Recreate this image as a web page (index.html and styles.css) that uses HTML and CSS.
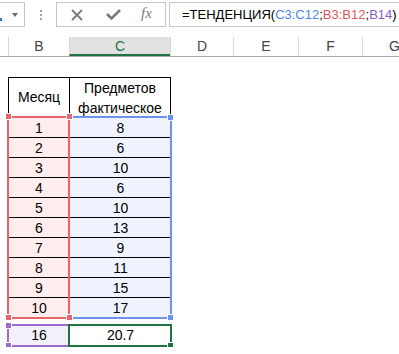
FILE: index.html
```html
<!DOCTYPE html>
<html lang="ru">
<head>
    <meta charset="UTF-8">
    <meta name="viewport" content="width=device-width, initial-scale=1.0">
    <title>ТЕНДЕНЦИЯ</title>
    <link rel="stylesheet" href="styles.css">
</head>
<body>
    <div class="toolbar">
        <div class="name-box">
            <span class="name-mark"></span>
            <span class="dropdown"></span>
        </div>
        <div class="grip"><span></span><span></span><span></span></div>
        <div class="fx-buttons">
            <svg class="btn-icon" width="14" height="14" viewBox="0 0 14 14">
                <path d="M2 2 L12 12 M12 2 L2 12" stroke="#7b7b7b" stroke-width="1.8" fill="none"/>
            </svg>
            <svg class="btn-icon" width="15" height="11" viewBox="0 0 15 11">
                <path d="M1 5 L5.5 9.5 L14 1" stroke="#7b7b7b" stroke-width="2.6" fill="none"/>
            </svg>
            <span class="fx">fx</span>
        </div>
        <div class="formula">=ТЕНДЕНЦИЯ(<span class="ref-blue">C3:C12</span>;<span class="ref-red">B3:B12</span>;<span class="ref-purple">B14</span>)</div>
    </div>

    <div class="col-headers">
        <div class="col corner"></div>
        <div class="col col-b">B</div>
        <div class="col col-c selected">C</div>
        <div class="col col-d">D</div>
        <div class="col col-e">E</div>
        <div class="col col-f">F</div>
        <div class="col col-g">G</div>
    </div>

    <div class="sheet">
        <div class="row row-empty"></div>
        <div class="row row-head">
            <div class="cell cell-b">Месяц</div>
            <div class="cell cell-c">Предметов<br>фактическое</div>
        </div>
        <div class="row data"><div class="cell cell-b">1</div><div class="cell cell-c">8</div></div>
        <div class="row data"><div class="cell cell-b">2</div><div class="cell cell-c">6</div></div>
        <div class="row data"><div class="cell cell-b">3</div><div class="cell cell-c">10</div></div>
        <div class="row data"><div class="cell cell-b">4</div><div class="cell cell-c">6</div></div>
        <div class="row data"><div class="cell cell-b">5</div><div class="cell cell-c">10</div></div>
        <div class="row data"><div class="cell cell-b">6</div><div class="cell cell-c">13</div></div>
        <div class="row data"><div class="cell cell-b">7</div><div class="cell cell-c">9</div></div>
        <div class="row data"><div class="cell cell-b">8</div><div class="cell cell-c">11</div></div>
        <div class="row data"><div class="cell cell-b">9</div><div class="cell cell-c">15</div></div>
        <div class="row data"><div class="cell cell-b">10</div><div class="cell cell-c">17</div></div>
        <div class="row row-gap"></div>
        <div class="row row-result">
            <div class="cell cell-b">16</div>
            <div class="cell cell-c">20.7</div>
        </div>

        <!-- рамки диапазонов из формулы -->
        <div class="range range-red"></div>
        <div class="range range-blue"></div>
        <div class="range range-purple"></div>
        <div class="range range-active"></div>

        <span class="handle red" style="left: 5px; top: 56px;"></span>
        <span class="handle red" style="left: 66px; top: 56px;"></span>
        <span class="handle red" style="left: 5px; top: 257px;"></span>
        <span class="handle red" style="left: 66px; top: 257px;"></span>
        <span class="handle blue" style="left: 167px; top: 57px;"></span>
        <span class="handle blue" style="left: 167px; top: 257px;"></span>
        <span class="handle purple" style="left: 5px; top: 265px;"></span>
        <span class="handle purple" style="left: 5px; top: 285px;"></span>
        <span class="handle green" style="left: 167px; top: 285px;"></span>
    </div>
</body>
</html>
```

FILE: styles.css
```css
body {
    margin: 0;
    background-color: white;
    font-family: "Liberation Sans", Arial, sans-serif;
    color: black;
    overflow: hidden;
}

/* строка формул */
.toolbar {
    display: flex;
    align-items: flex-start;
    height: 30px;
    padding-top: 2px;
    box-sizing: border-box;
    background-color: white;
    overflow: hidden;
}

.toolbar > div {
    flex-shrink: 0;
}

.name-box {
    position: relative;
    width: 24px;
    height: 23px;
    border: 1px solid #c6c6c6;
    border-left: none;
}

.name-mark {
    position: absolute;
    left: 0;
    top: 15px;
    width: 2px;
    height: 3px;
    background-color: #2b78d0;
}

.dropdown {
    position: absolute;
    left: 12px;
    top: 10px;
    border-left: 3px solid transparent;
    border-right: 3px solid transparent;
    border-top: 4px solid #6b6b6b;
}

.grip {
    display: flex;
    flex-direction: column;
    gap: 2px;
    margin-left: 15px;
    padding-top: 8px;
}

.grip span {
    width: 2px;
    height: 2px;
    background-color: #a6a6a6;
}

.fx-buttons {
    display: flex;
    align-items: center;
    width: 108px;
    height: 23px;
    margin-left: 14px;
    border: 1px solid #c6c6c6;
}

.btn-icon:first-child {
    margin-left: 13px;
}

.btn-icon + .btn-icon {
    margin-left: 22px;
}

.fx {
    margin-left: 20px;
    margin-top: -3px;
    font-family: "Liberation Serif", serif;
    font-style: italic;
    font-size: 15px;
    color: #7b7b7b;
}

.toolbar > .formula {
    flex: 1 1 auto;
    min-width: 0;
    overflow: hidden;
    height: 23px;
    margin-left: 3px;
    padding-left: 12px;
    border: 1px solid #c6c6c6;
    border-right: none;
    font-size: 13px;
    line-height: 24px;
    white-space: nowrap;
}

.ref-blue { color: #4f86e8; }
.ref-red { color: #e0555a; }
.ref-purple { color: #8b5cc4; }

/* заголовки столбцов */
.col-headers {
    display: flex;
    height: 20px;
    margin-top: 7px;
    box-sizing: border-box;
    border-bottom: 1px solid #ababab;
    overflow: hidden;
}

.col {
    flex-shrink: 0;
    box-sizing: border-box;
    border-left: 1px solid #d8d8d8;
    text-align: center;
    font-size: 14px;
    line-height: 19px;
    color: #444;
}

.corner { width: 8px; border-left: none; }
.col-b { width: 61px; }
.col-c { width: 101px; }
.col-d { width: 63px; }
.col-e { width: 65px; }
.col-f { width: 64px; }
.col-g { width: 64px; }

.col.selected {
    background-color: #e1e1e1;
    color: #217346;
    border-bottom: 2px solid #217346;
    line-height: 18px;
}

/* лист */
.sheet {
    position: relative;
    padding-left: 8px;
    font-size: 14px;
}

.row {
    display: flex;
    height: 20px;
}

.row-head {
    height: 41px;
}

.row-gap {
    height: 6px;
}

.row-result {
    height: 23px;
}

.cell {
    box-sizing: border-box;
    text-align: center;
}

.cell-b { width: 62px; }
.cell-c { width: 101px; }

.row-head .cell {
    border-top: 1px solid black;
    border-bottom: 1px solid black;
    border-right: 1px solid black;
    line-height: 20px;
}

.row-head .cell-b {
    border-left: 1px solid black;
    line-height: 39px;
}

.data .cell {
    height: 20px;
    line-height: 20px;
    border-bottom: 1px solid black;
}

.data .cell-b { background-color: #fdeded; }
.data .cell-c { background-color: #eef3fd; }

.row-result .cell {
    line-height: 23px;
}

.row-result .cell-b { background-color: #f3f0f9; }

.range {
    position: absolute;
    box-sizing: border-box;
    border: 2px solid;
}

.range-red {
    left: 7px;
    top: 59px;
    width: 63px;
    height: 203px;
    border-color: #e4666a;
}

.range-blue {
    left: 71px;
    top: 59px;
    width: 101px;
    height: 203px;
    border-color: #6b93ec;
    border-left: none;
}

.range-purple {
    left: 7px;
    top: 267px;
    width: 63px;
    height: 23px;
    border-color: #9a6dca;
}

.range-active {
    left: 68px;
    top: 267px;
    width: 104px;
    height: 23px;
    border-color: #217346;
}

/* маркеры на углах диапазонов */
.handle {
    position: absolute;
    width: 5px;
    height: 5px;
    border: 1px solid white;
}

.handle.red { background-color: #e4666a; }
.handle.blue { background-color: #6b93ec; }
.handle.purple { background-color: #9a6dca; }
.handle.green { background-color: #217346; }
```
